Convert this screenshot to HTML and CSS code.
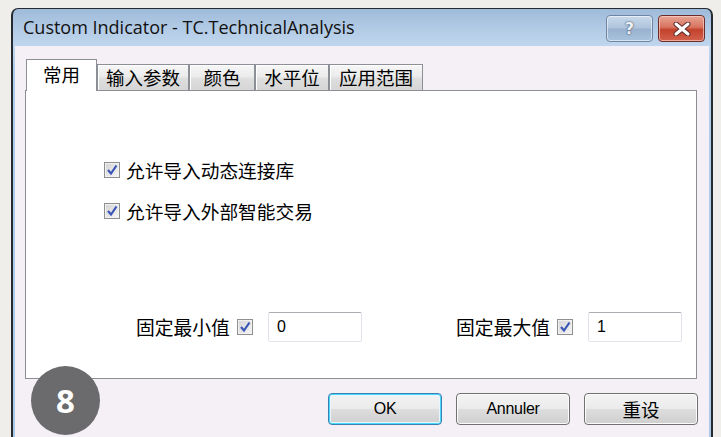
FILE: index.html
```html
<!DOCTYPE html>
<html lang="zh">
<head>
<meta charset="utf-8">
<title>Custom Indicator</title>
<link rel="stylesheet" href="styles.css">
</head>
<body>
<div class="window">
  <div class="titlebar">
    <span class="title">Custom Indicator - TC.TechnicalAnalysis</span>
    <div class="caption-btns">
      <button class="cap help">?</button>
      <button class="cap close">
        <svg width="20" height="14" viewBox="0 0 20 14">
          <path d="M4 2 L16 12 M16 2 L4 12" stroke="#5a2a2a" stroke-width="5" stroke-linecap="round"/>
          <path d="M4 2 L16 12 M16 2 L4 12" stroke="#ffffff" stroke-width="3" stroke-linecap="round"/>
        </svg>
      </button>
    </div>
  </div>
  <div class="client">
    <div class="tabs">
      <div class="tab active">常用</div>
      <div class="tab t-input">输入参数</div>
      <div class="tab t-color">颜色</div>
      <div class="tab t-level">水平位</div>
      <div class="tab t-scope">应用范围</div>
    </div>
    <div class="panel">
      <label class="check-row">
        <span class="checkbox"><svg width="16" height="16" viewBox="0 0 16 16"><path d="M4 8 L7 11.5 L12.5 3.5" fill="none" stroke="#3b56b6" stroke-width="2.2"/></svg></span>
        <span>允许导入动态连接库</span>
      </label>
      <label class="check-row">
        <span class="checkbox"><svg width="16" height="16" viewBox="0 0 16 16"><path d="M4 8 L7 11.5 L12.5 3.5" fill="none" stroke="#3b56b6" stroke-width="2.2"/></svg></span>
        <span>允许导入外部智能交易</span>
      </label>
      <div class="limits">
        <div class="limit">
          <span class="limit-label">固定最小值</span>
          <span class="checkbox"><svg width="16" height="16" viewBox="0 0 16 16"><path d="M4 8 L7 11.5 L12.5 3.5" fill="none" stroke="#3b56b6" stroke-width="2.2"/></svg></span>
          <span class="field">0</span>
        </div>
        <div class="limit">
          <span class="limit-label">固定最大值</span>
          <span class="checkbox"><svg width="16" height="16" viewBox="0 0 16 16"><path d="M4 8 L7 11.5 L12.5 3.5" fill="none" stroke="#3b56b6" stroke-width="2.2"/></svg></span>
          <span class="field">1</span>
        </div>
      </div>
    </div>
    <div class="actions">
      <button class="btn default">OK</button>
      <button class="btn">Annuler</button>
      <button class="btn cjk">重设</button>
    </div>
  </div>
</div>
<div class="step-badge">8</div>
</body>
</html>
```

FILE: styles.css
```css
html, body {
  margin: 0;
  padding: 0;
}

body {
  background: #efeeea;
  padding: 8px 8px 0 11px;
  height: 437px;
  box-sizing: border-box;
  overflow: hidden;
  position: relative;
  font-family: "Noto Sans CJK SC", "Noto Sans", sans-serif;
  color: #000;
}

.window {
  width: 702px;
  height: 429px;
  box-sizing: border-box;
  border: 2px solid #262b31;
  border-top-width: 1px;
  border-bottom: none;
  border-radius: 7px 7px 0 0;
  background: linear-gradient(to bottom, #9fbbda 0, #b4cce6 22px, #c0d6ee 37px, #b2cdea 60px, #acc9e8 100%);
  display: flex;
  flex-direction: column;
  overflow: hidden;
}

/* caption */
.titlebar {
  height: 37px;
  flex: none;
  display: flex;
  justify-content: space-between;
  align-items: flex-start;
  padding: 0 6px 0 10px;
}

.title {
  font-family: "Open Sans", "Noto Sans", sans-serif;
  font-size: 18px;
  line-height: 37px;
  color: #111;
}

.caption-btns {
  display: flex;
  gap: 5px;
  margin-top: 6px;
}

.cap {
  width: 47px;
  height: 27px;
  box-sizing: border-box;
  border-radius: 4px;
  padding: 0;
  display: flex;
  align-items: center;
  justify-content: center;
}

.help {
  border: 1px solid #6d86a4;
  background: linear-gradient(to bottom, #c9d9ea 0, #aec4dc 48%, #98b2cf 52%, #a9c2de 100%);
  box-shadow: inset 0 0 0 1px rgba(255, 255, 255, 0.55);
  font-family: "DejaVu Sans", sans-serif;
  font-weight: bold;
  font-size: 16px;
  color: #eef1f6;
  text-shadow: 0 0 2px #44556b, 0 0 1px #44556b;
}

.close {
  border: 1px solid #6e2c28;
  background: linear-gradient(to bottom, #e8a493 0, #d8735f 45%, #c3412c 55%, #d2624d 100%);
  box-shadow: inset 0 0 0 1px rgba(255, 220, 210, 0.6);
}

/* client area */
.client {
  flex: 1;
  margin: 0 2px;
  background: #f4f0f6;
  display: flex;
  flex-direction: column;
  padding: 13px 12px 12px 10px;
}

.tabs {
  display: flex;
  align-items: flex-end;
  height: 31px;
  margin-left: 1px;
  position: relative;
  z-index: 1;
}

.tab {
  box-sizing: border-box;
  height: 26px;
  border: 1px solid #8c8f96;
  border-bottom: none;
  background: linear-gradient(to bottom, #f6f6f6 0, #ececec 45%, #dedede 55%, #d6d6d6 100%);
  box-shadow: inset 1px 1px 0 #ffffff;
  font-size: 18.5px;
  line-height: 25px;
  text-align: center;
  white-space: nowrap;
}

.tab.active {
  width: 71px;
  height: 32px;
  margin-bottom: -1px;
  background: #fff;
  box-shadow: none;
  line-height: 28px;
  position: relative;
  z-index: 2;
}

.t-input { width: 92px; }
.t-color { width: 66px; }
.t-level { width: 74px; }
.t-scope { width: 94px; }

.panel {
  height: 289px;
  box-sizing: border-box;
  border: 1px solid #8c8e94;
  background: #fff;
  display: flex;
  flex-direction: column;
  gap: 17px;
  padding: 67px 14px 36px 78px;
}

.check-row {
  display: flex;
  align-items: center;
  gap: 6px;
  height: 24px;
  font-size: 18.7px;
  line-height: 24px;
}

.checkbox {
  width: 16px;
  height: 16px;
  box-sizing: border-box;
  border: 1px solid #8e8f8f;
  background: linear-gradient(135deg, #d3d3d3 0, #e8e8e8 60%, #f6f6f6 100%);
  box-shadow: inset 0 0 0 1px #f2f2f2;
  position: relative;
  flex: none;
}

.checkbox svg {
  position: absolute;
  left: -1px;
  top: -1px;
}

.limits {
  margin-top: auto;
  margin-left: 32px;
  display: flex;
  justify-content: space-between;
}

.limit {
  display: flex;
  align-items: center;
  height: 30px;
}

.limit-label {
  font-size: 18.8px;
  line-height: 24px;
  margin-right: 7px;
}

.field {
  width: 94px;
  height: 30px;
  box-sizing: border-box;
  margin-left: 15px;
  border: 1px solid #e2e3ea;
  border-top-color: #abadb3;
  border-radius: 2px;
  background: #fff;
  font-family: "Liberation Sans", Arial, sans-serif;
  font-size: 16px;
  line-height: 28px;
  padding-left: 8px;
}

/* dialog buttons */
.actions {
  margin-top: 14px;
  display: flex;
  justify-content: flex-end;
  gap: 14px;
  margin-right: -1px;
}

.btn {
  width: 114px;
  height: 32px;
  box-sizing: border-box;
  border: 1px solid #707070;
  border-radius: 4px;
  background: linear-gradient(to bottom, #f3f3f3 0, #ebebeb 48%, #dddddd 52%, #cfcfcf 100%);
  box-shadow: inset 0 0 0 1px #fcfcfc;
  font-family: "Liberation Sans", Arial, sans-serif;
  font-size: 16px;
  letter-spacing: -0.3px;
  color: #000;
  padding: 0;
}

.btn.default {
  border-color: #3c7fb1;
  box-shadow: inset 0 0 0 1px #48d8fb, inset 0 0 0 2px #eaf6fd;
}

.btn.cjk {
  font-family: "Noto Sans CJK SC", sans-serif;
  font-size: 18.5px;
  letter-spacing: 0;
}

/* step marker laid over the dialog */
.step-badge {
  position: absolute;
  left: 31px;
  top: 366px;
  width: 69px;
  height: 69px;
  border-radius: 50%;
  background: #6b6b6d;
  color: #fff;
  font-family: "Open Sans", sans-serif;
  font-weight: bold;
  font-size: 33px;
  line-height: 69px;
  text-align: center;
}
```
